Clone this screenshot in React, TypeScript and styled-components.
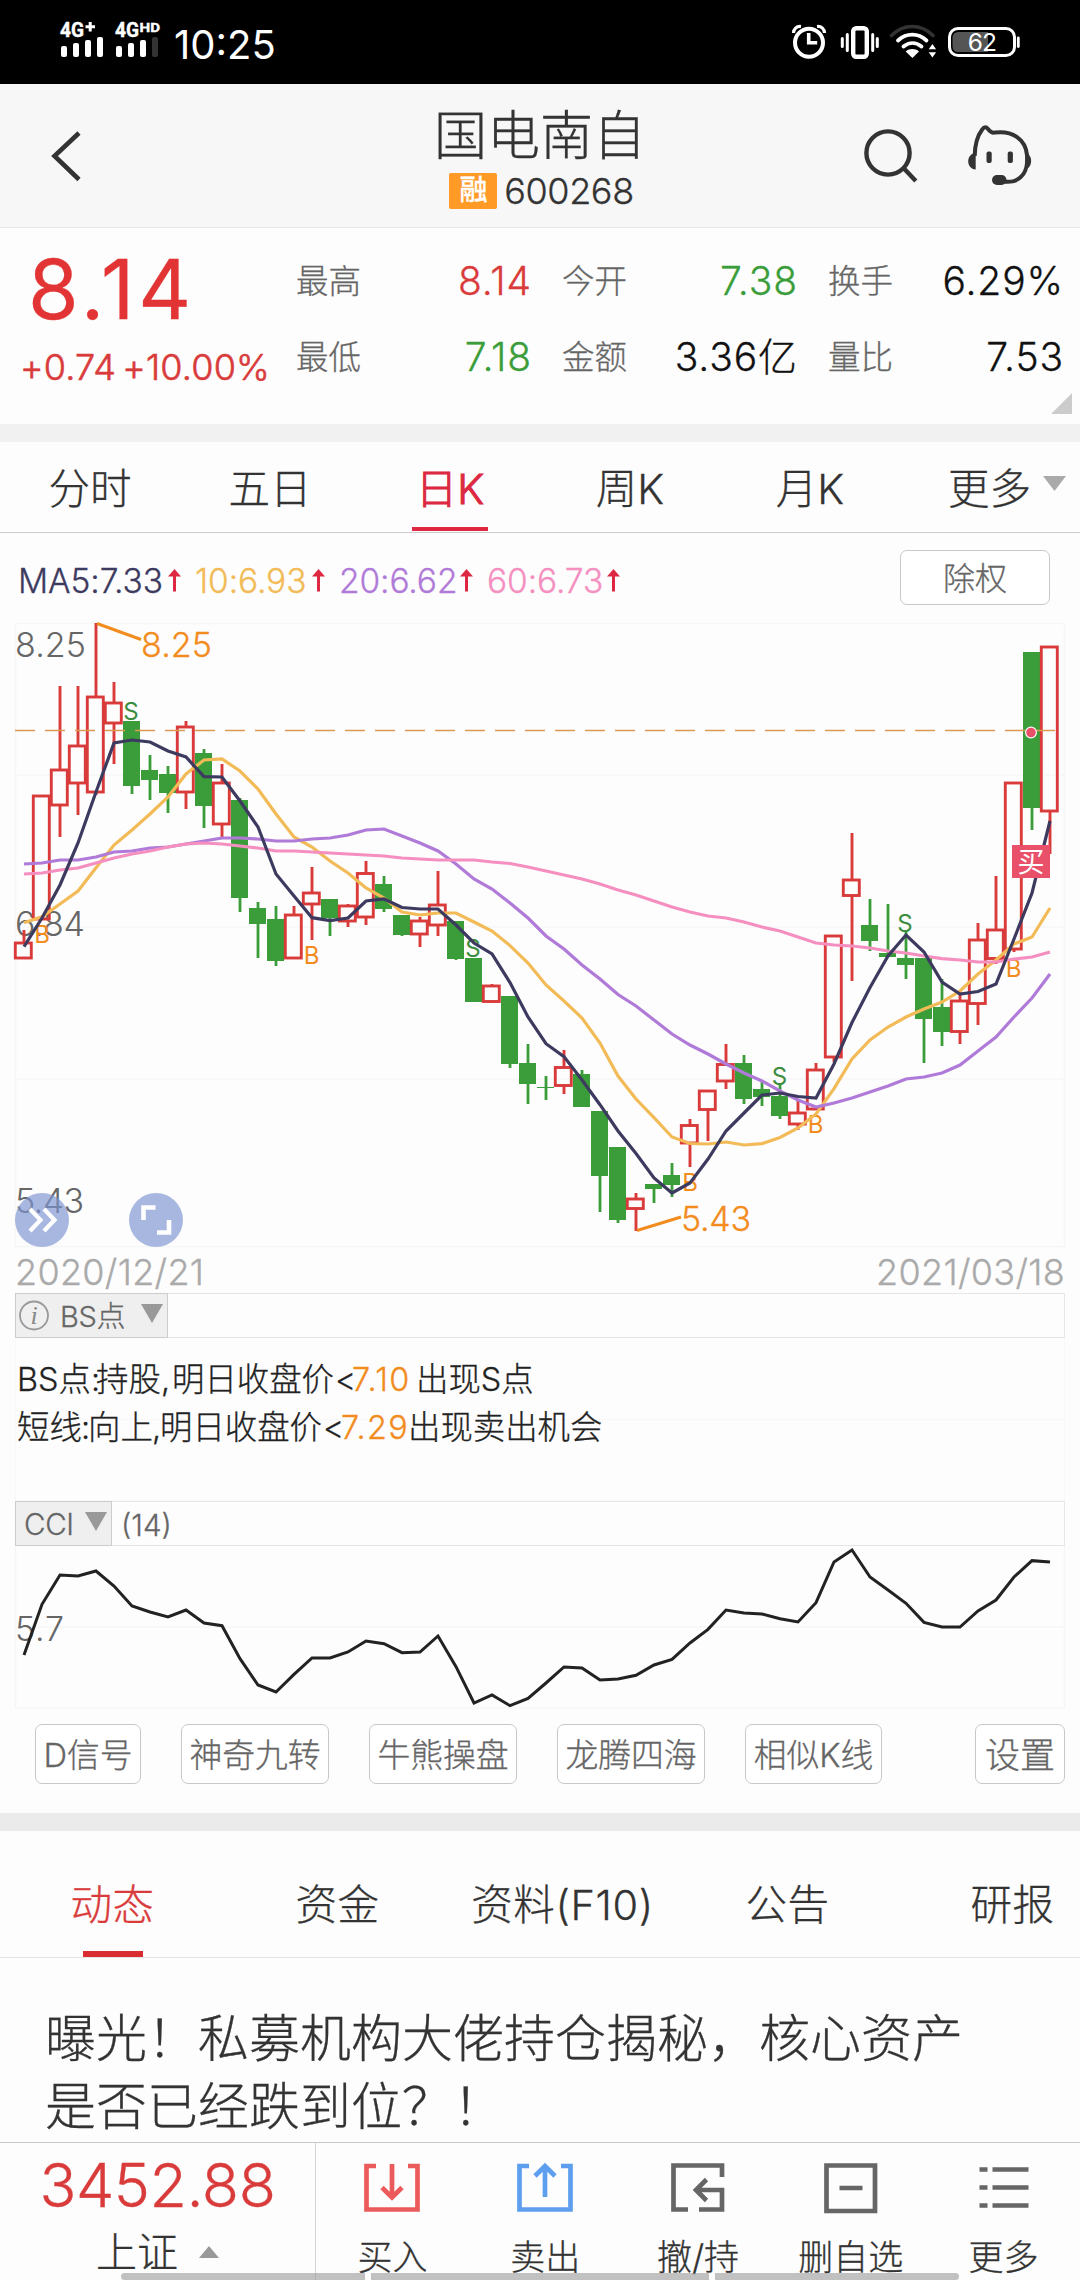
import React from "react";
import styled, { createGlobalStyle } from "styled-components";

const FONT = `Inter, "Noto Sans CJK SC", sans-serif`;

const RED = "#d93b3b";
const GREEN = "#3a9d3a";
const CRIMSON = "#dc2840";
const ORANGE = "#f28c1e";

const GlobalStyle = createGlobalStyle`
  * { box-sizing: border-box; }
  body { margin: 0; background: #fff; }
  svg { display: block; flex: none; }
`;

const Page = styled.main`
  position: relative;
  display: flex;
  flex-direction: column;
  width: 1080px;
  height: 2280px;
  overflow: hidden;
  background: #fdfdfd;
  color: #333;
  font-family: ${FONT};
  font-weight: 300;
  white-space: nowrap;
  -webkit-text-stroke-width: 0.3px;
`;

/* ---------- status bar ---------- */

const StatusBar = styled.header`
  display: flex;
  justify-content: space-between;
  flex: none;
  height: 84px;
  padding: 0 56px 0 56px;
  background: #000;
  color: #fff;
`;

const StatusGroup = styled.div`
  display: flex;
`;

const Clock = styled.time`
  margin-left: 10px;
  font-size: 40px;
  font-weight: 400;
  line-height: 89px;
  -webkit-text-stroke-width: 0;
`;

/* ---------- title bar ---------- */

const TitleBar = styled.div`
  display: grid;
  grid-template-columns: 240px 1fr 240px;
  flex: none;
  height: 144px;
  background: #f7f7f7;
  border-bottom: 1px solid #e6e6e6;
`;

const TitleBlock = styled.div`
  display: flex;
  flex-direction: column;
  align-items: center;
  padding-top: 21px;
`;

const StockName = styled.h1`
  margin: 0;
  font-size: 53px;
  font-weight: 300;
  line-height: 62px;
`;

const CodeLine = styled.div`
  display: flex;
  align-items: center;
  gap: 7px;
  margin: 4px 0 0 3px;
  font-size: 36px;
  line-height: 40px;
  letter-spacing: -0.4px;
`;

const MarginBadge = styled.span`
  width: 48px;
  height: 36px;
  border-radius: 2px;
  background: #ff9a27;
  color: #fff;
  font-size: 28px;
  font-weight: 500;
  line-height: 35px;
  text-align: center;
`;

const HeaderIcons = styled.div`
  display: flex;
  justify-content: flex-end;
`;

/* ---------- quote ---------- */

const Quote = styled.section`
  display: flex;
  flex: none;
  height: 196px;
`;

const PriceBlock = styled.div`
  width: 296px;
  padding: 19px 0 0 20px;
  color: ${RED};
`;

const Price = styled.div`
  padding-left: 8px;
  color: #e23434;
  font-size: 82px;
  font-weight: 400;
  line-height: 86px;
  letter-spacing: 3.8px;
`;

const Change = styled.div`
  display: flex;
  gap: 6px;
  margin-top: 14px;
  font-size: 36px;
  font-weight: 300;
  line-height: 40px;
  letter-spacing: 0.2px;
  -webkit-text-stroke-width: 0.6px;
`;

const Stats = styled.dl`
  display: grid;
  grid-template-columns: repeat(3, 236px);
  grid-auto-rows: 40px;
  column-gap: 30px;
  row-gap: 36px;
  margin: 33px 0 0;
`;

const Stat = styled.div`
  display: flex;
  justify-content: space-between;
  align-items: center;
`;

const StatLabel = styled.dt`
  padding-top: 1px;
  color: #666;
  font-size: 32.5px;
  line-height: 40px;
`;

const StatValue = styled.dd<{ $color?: string }>`
  margin: 0;
  color: ${(p) => p.$color ?? "#111"};
  font-size: 39px;
  line-height: 42px;
  letter-spacing: 0.9px;
`;

const Corner = styled.i`
  align-self: flex-end;
  width: 0;
  height: 0;
  margin: 0 0 10px -13px;
  border-bottom: 21px solid #ccc;
  border-left: 21px solid transparent;
`;

const Band = styled.div<{ $shade: string }>`
  flex: none;
  height: 18px;
  background: ${(p) => p.$shade};
`;

/* ---------- period tabs ---------- */

const PeriodTabs = styled.nav`
  display: flex;
  flex: none;
  height: 91px;
  border-bottom: 1px solid #ccc;
`;

const PeriodTab = styled.div<{ $active?: boolean }>`
  display: flex;
  justify-content: center;
  flex: 1;
  font-size: 41.5px;
  line-height: 95px;
  color: ${(p) => (p.$active ? CRIMSON : "#333")};

  span {
    padding: 0 4px;
    height: 89px;
    border-bottom: ${(p) => (p.$active ? `4px solid ${CRIMSON}` : "0")};
    -webkit-text-stroke-width: ${(p) => (p.$active ? "1px" : "0.3px")};
  }
`;

const Triangle = styled.i<{ $w: number; $h: number; $color: string; $up?: boolean }>`
  flex: none;
  width: ${(p) => p.$w}px;
  height: ${(p) => p.$h}px;
  background: ${(p) => p.$color};
  clip-path: ${(p) => (p.$up ? "polygon(50% 0, 100% 100%, 0 100%)" : "polygon(0 0, 100% 0, 50% 100%)")};
`;

const MoreMark = styled.div`
  margin: 34px -30px 0 8px;
  line-height: 0;
`;

/* ---------- moving averages ---------- */

const AverageRow = styled.div`
  display: flex;
  align-items: center;
  flex: none;
  height: 89px;
  padding: 0 30px 0 18px;
`;

const Average = styled.div<{ $color: string; $width: number }>`
  display: flex;
  justify-content: space-between;
  align-items: center;
  width: ${(p) => p.$width}px;
  margin-right: 14px;
  padding-top: 6px;
  color: ${(p) => p.$color};
  font-size: 33.5px;
  line-height: 40px;
  letter-spacing: -0.1px;
`;

const OutlineButton = styled.button<{ $width?: number; $height: number; $size?: number }>`
  display: flex;
  align-items: center;
  justify-content: center;
  flex: none;
  width: ${(p) => (p.$width ? `${p.$width}px` : "auto")};
  height: ${(p) => p.$height}px;
  padding: 2px 0 0;
  border: 1.5px solid #c8c8c8;
  border-radius: 7px;
  background: #fff;
  color: #666;
  font-family: inherit;
  font-size: ${(p) => p.$size ?? 32}px;
  font-weight: 300;
  line-height: 1;
  -webkit-text-stroke-width: 0.3px;
`;

const Push = styled.span`
  flex: 1;
`;

/* ---------- chart ---------- */

const ChartFrame = styled.div`
  flex: none;
  height: 627px;
`;

const DateRow = styled.div`
  display: flex;
  justify-content: space-between;
  flex: none;
  height: 44px;
  padding: 0 15px 0 15px;
  color: #aaa;
  font-size: 36px;
  line-height: 47px;
  letter-spacing: 0.3px;
`;

const IndicatorBar = styled.div`
  display: flex;
  flex: none;
  height: 45px;
  margin: 0 15px;
  border: 1px solid #e6e6e6;
  color: #666;
  font-size: 29.5px;
  line-height: 47px;
`;

const IndicatorPicker = styled.div<{ $width: number }>`
  display: flex;
  align-items: center;
  width: ${(p) => p.$width}px;
  margin: -1px 9px -1px -1px;
  padding: 0 4px 0 3px;
  border: 1px solid #ccc;
  background: #efefef;

  i { margin-bottom: 4px; }
`;

const PickerName = styled.span<{ $left: number; $size: number }>`
  flex: 1;
  margin-left: ${(p) => p.$left}px;
  padding-top: 1px;
  font-size: ${(p) => p.$size}px;
  letter-spacing: -0.3px;
`;

const Advice = styled.div`
  flex: none;
  height: 163px;
  margin: 0 15px;
  padding: 18px 0 0 1px;
  border: 1px solid #f8f8f8;
  border-top: 0;
  background: linear-gradient(#f8f8f8, #f8f8f8) 0 81px / 100% 1px no-repeat;
  color: #222;
  font-size: 32.4px;
  line-height: 48px;
`;

const AdviceLine = styled.div`
  display: flex;
`;

const Piece = styled.span<{ $width: number; $hot?: boolean }>`
  width: ${(p) => p.$width}px;
  color: ${(p) => (p.$hot ? ORANGE : "inherit")};
  letter-spacing: ${(p) => (p.$hot ? "1.4px" : "0")};
`;

const StrategyRow = styled.div`
  display: flex;
  gap: 40px;
  flex: none;
  height: 104px;
  padding: 15px 15px 0 35px;
`;

/* ---------- news ---------- */

const NewsTabs = styled.nav`
  display: flex;
  flex: none;
  height: 127px;
  border-bottom: 1px solid #e4e4e4;
`;

const NewsTab = styled.div<{ $active?: boolean }>`
  display: flex;
  flex: none;
  flex-direction: column;
  align-items: center;
  width: 225px;
  padding-top: 44px;
  color: ${(p) => (p.$active ? RED : "#333")};
  font-size: 41.5px;
  line-height: 60px;
  letter-spacing: 0.6px;
`;

const NewsMark = styled.i`
  width: 60px;
  height: 6px;
  margin-top: 16px;
  background: #d92c30;
`;

const Headline = styled.h2`
  flex: none;
  width: 990px;
  height: 184px;
  margin: 0;
  padding: 47px 0 0 45px;
  font-size: 51px;
  font-weight: 300;
  line-height: 68px;
`;

/* ---------- bottom bar ---------- */

const BottomBar = styled.footer`
  display: flex;
  flex: none;
  height: 138px;
  border-top: 1px solid #c8c8c8;
  background: #fdfdfd;
`;

const IndexCell = styled.div`
  display: flex;
  flex-direction: column;
  align-items: center;
  width: 316px;
  padding-top: 7px;
  border-right: 1px solid #d4d4d4;
`;

const IndexValue = styled.div`
  color: ${RED};
  font-size: 61px;
  line-height: 70px;
  letter-spacing: -0.5px;
`;

const IndexName = styled.div`
  display: flex;
  align-items: center;
  gap: 21px;
  padding-top: 6px;
  font-size: 41px;
  line-height: 52px;
`;

const Action = styled.div`
  display: flex;
  flex: 1;
  flex-direction: column;
  align-items: center;
  padding-top: 17px;
  font-size: 35px;
  line-height: 44px;

  span { margin-top: 19px; }
`;

const HomeBar = styled.div`
  position: absolute;
  left: 121px;
  bottom: 0;
  display: flex;
  gap: 6px;
  width: 838px;
  height: 7px;
`;

const HomePart = styled.i<{ $grow: number; $radius: string }>`
  flex: ${(p) => p.$grow} 0 0;
  border-radius: ${(p) => p.$radius};
  background: rgba(150, 150, 150, 0.58);
`;

/* ---------- data ---------- */

type Candle = [up: 0 | 1, high: number, top: number, bottom: number, low: number];

const CANDLES: Candle[] = [
  [1, 930, 943, 958, 959], [1, 796, 796, 919, 919], [1, 686, 770, 805, 837], [1, 686, 746, 783, 815],
  [1, 623, 697, 792, 795], [1, 682, 703, 723, 764], [0, 721, 721, 786, 794], [0, 755, 770, 780, 800],
  [0, 766, 774, 793, 813], [1, 721, 727, 792, 809], [0, 749, 753, 806, 828], [1, 764, 783, 824, 837],
  [0, 798, 800, 898, 912], [0, 902, 908, 924, 958], [0, 906, 919, 961, 966], [1, 906, 915, 958, 958],
  [1, 867, 893, 904, 940], [0, 899, 899, 918, 936], [1, 904, 906, 921, 927], [1, 861, 873.5, 917, 925],
  [0, 876, 884, 909, 912], [0, 915, 915, 935, 936], [1, 917, 921, 934, 947], [1, 871, 905, 925, 936],
  [0, 921, 921, 959, 960], [0, 958, 958, 1002, 1002], [1, 984, 986, 1001.5, 1001], [0, 996, 996, 1064, 1068],
  [0, 1044, 1063, 1084, 1104], [0, 1076, 1087, 1088, 1100], [1, 1050, 1067.5, 1085.5, 1094], [0, 1070, 1074, 1107, 1107],
  [0, 1111, 1111, 1176, 1212], [0, 1147, 1147, 1220, 1223], [1, 1193, 1199, 1208.5, 1231], [0, 1184, 1184, 1189, 1203],
  [0, 1163, 1175, 1185, 1197], [1, 1119, 1125.5, 1143, 1167], [1, 1090, 1091, 1109.5, 1141], [1, 1044, 1064.5, 1081, 1089],
  [0, 1055, 1063, 1099, 1104], [0, 1081, 1089, 1097, 1106], [0, 1085, 1096, 1116, 1119], [1, 1101, 1113, 1124, 1130],
  [1, 1063, 1070, 1109, 1109], [1, 936, 936, 1057, 1062], [1, 833, 880, 895.5, 981], [0, 899, 925, 941, 951],
  [0, 904, 953, 957, 957], [0, 932, 958, 965, 979], [0, 958, 958, 1019, 1063], [0, 979, 1007, 1032, 1046],
  [1, 991, 1001, 1031.5, 1044], [1, 923, 940, 1003.5, 1025], [1, 876, 930, 958.5, 964], [1, 783, 783, 949, 952],
  [0, 652, 652, 808, 830], [1, 647, 647, 811, 854],
];

const AVERAGES = [
  {
    color: "#f2bb57",
    ys: [922.7, 916.7, 904, 891, 867.7, 845, 830, 814, 797, 774, 760, 759, 771, 789, 814, 837, 847, 861, 873, 888, 898, 912, 915, 913, 913, 922, 931, 945.6, 963, 985, 1001, 1018, 1043, 1076, 1099, 1117.7, 1137, 1143.5, 1144, 1142, 1145, 1143.6, 1137.5, 1128, 1114, 1088.6, 1059, 1040, 1027, 1017, 1009, 1002, 991, 974, 960, 944, 937, 908],
  },
  {
    color: "#b07ad8",
    ys: [864, 863, 860, 860, 857, 852, 851, 848, 847, 844, 841, 838, 838, 839, 841, 841, 839, 838, 835, 830, 829, 836, 843, 851, 864, 879, 889, 903, 918, 936, 949, 965, 979, 994.5, 1006, 1020, 1034, 1045, 1054, 1064, 1073, 1081, 1091, 1100, 1107, 1103, 1098, 1092, 1086, 1079, 1077, 1073, 1065, 1051, 1037, 1017, 998, 974],
  },
  {
    color: "#f48fc0",
    ys: [874, 873, 870, 868, 863, 858, 854, 851, 847, 844, 843, 844, 846, 848, 851, 851, 852, 853, 854, 855, 856, 858, 859, 860, 860, 860, 862, 863.5, 867, 871, 875, 879, 884, 890, 895, 901, 907, 912, 916, 918, 922, 927, 931, 937, 943, 945, 946, 948, 951, 953, 956, 958.6, 960, 962, 962, 959, 957, 952],
  },
  {
    color: "#3d3a5f",
    ys: [946.7, 918, 885, 843, 792, 743, 740, 742, 751, 757, 776.7, 777, 801, 827, 874, 896, 917.7, 920.7, 918, 901, 899, 907.5, 909, 909, 925, 943, 954, 982.6, 1017, 1043.7, 1056.6, 1080, 1104.7, 1131, 1153.5, 1178, 1193, 1183, 1159, 1131, 1113, 1095, 1093, 1096.5, 1098, 1064, 1022.5, 987.5, 956, 935, 952, 982, 994, 991.5, 984, 939, 893, 821],
  },
];

const CCI = [525, 373, 285, 288, 273, 318, 378, 396, 411, 390, 429, 437, 536, 615, 636, 583, 534, 534, 516, 483, 491, 518, 516, 468, 560, 669, 645, 677, 655, 609, 561, 564, 600, 597, 586, 555, 538, 489, 448, 390, 399, 402, 416, 426, 368, 246, 210, 291, 330, 370, 427, 441, 441, 393, 360, 291, 242, 246].map(
  (v) => 1480 + v / 3,
);

const SIGNALS: [string, number, number][] = [
  ["S", 131, 719.5], ["S", 473, 957], ["S", 779.5, 1084.5], ["S", 905, 931.5],
  ["B", 42, 943], ["B", 311.5, 963.5], ["B", 690, 1190.5], ["B", 815.500, 1132.5], ["B", 1013.5, 977],
];

const slotX = (i: number) => 24 + i * 18;
const toPoints = (ys: number[]) => ys.map((y, i) => `${slotX(i)},${y}`).join(" ");

/* ---------- drawings ---------- */

const SignalIcon = () => (
  <svg width="108" height="84" viewBox="56 0 108 84" fill="#fff">
    <g fontFamily="Roboto, sans-serif" fontWeight="700" stroke="#fff" strokeWidth="0.4">
      <text x="60" y="36.5" fontSize="19.5" textLength="24" lengthAdjust="spacingAndGlyphs">4G</text>
      <text x="115" y="36.5" fontSize="19.5" textLength="24" lengthAdjust="spacingAndGlyphs">4G</text>
      <text x="139.5" y="32" fontSize="13.5" textLength="20.5" lengthAdjust="spacingAndGlyphs">HD</text>
    </g>
    <path d="M85.5 26.7h9.5M90.2 22v9.5" stroke="#fff" strokeWidth="3" />
    {[0, 1, 2, 3].map((i) => (
      <React.Fragment key={i}>
        <rect x={61 + i * 12} y={46 - i * 3} width="6" height={11 + i * 3} rx="2" />
        <rect x={116 + i * 12} y={46 - i * 3} width="6" height={11 + i * 3} rx="2" fill={i === 3 ? "#333" : "#fff"} />
      </React.Fragment>
    ))}
  </svg>
);

const DeviceIcons = () => (
  <svg width="234" height="84" viewBox="790 0 234 84" fill="none" stroke="#fff">
    <circle cx="809" cy="42.7" r="14" strokeWidth="4" />
    <path d="M808.7 33v9.7h8.5" strokeWidth="3.6" />
    <path d="M793.5 33c0-4 3-7 7.500-6.500M824.500 33c0-4-3-7-7.500-6.500" strokeWidth="3.200" />
    <rect x="853.2" y="28.2" width="13.600" height="28.600" rx="3" strokeWidth="4.400" />
    <path d="M847.300 34.500v16M842.300 38.500v8M872.700 34.500v16M877.300 38.500v8" strokeWidth="3" strokeLinecap="round" />
    <path d="M891.500 35.500c12-12 29.500-12 41.500 0" stroke="#333" strokeWidth="3.600" strokeLinecap="round" />
    <path d="M898 40.500c8.500-7.800 20-7.800 28.500 0M903.500 46.500c5.500-4.500 12.500-4.500 18 0" strokeWidth="3.800" strokeLinecap="round" />
    <path d="M905.700 51.500c4-3.200 9.300-3.200 13.300 0l-6.600 6.500z" fill="#fff" stroke="none" />
    <path d="M928.700 49.300l3.700-5.300 3.700 5.300zM928.700 52.300l3.700 5.300 3.700-5.300z" fill="#fff" stroke="none" />
    <rect x="949.500" y="28.500" width="65" height="27" rx="8.500" strokeWidth="3" />
    <path d="M958 32h30v20h-30a5.500 5.500 0 0 1-5.500-5.500v-9a5.500 5.500 0 0 1 5.500-5.500z" fill="#555" stroke="none" />
    <path d="M1018.300 38v8.500" strokeWidth="2.800" strokeLinecap="round" />
    <text x="982" y="51.300" fill="#fff" stroke="none" fontFamily="Inter" fontWeight="400" fontSize="24.500" textAnchor="middle" letterSpacing="-0.8">62</text>
  </svg>
);

const BackIcon = () => (
  <svg width="120" height="143" viewBox="0 84 120 143" fill="none" stroke="#333" strokeWidth="4.600">
    <path d="M79 133L54.500 156 79 179.500" />
  </svg>
);

const ToolIcons = () => (
  <svg width="240" height="143" viewBox="840 84 240 143" fill="none" stroke="#333" strokeWidth="4.400">
    <circle cx="888" cy="153" r="21.600" />
    <path d="M903.500 168l12.300 13" />
    <path d="M974.700 156c.2-12 2.500-20 7.500-26.500 2.300-3 4-2.700 5.800-.5 1.800 2.300 3.500 4.200 6.500 3.600 17.500-2.600 31 6.400 32.500 22.400 1 14-2.500 22-12.500 25.800-3 1-6 1-10 1" strokeWidth="4" />
    <path d="M975.700 153v16.500c-10-.5-10-16 0-16.500z" fill="#333" stroke="none" />
    <path d="M1025.500 153c7.500 1 7.500 15 0 15.800z" fill="#333" stroke="none" />
    <rect x="986.500" y="151.500" width="5.200" height="11.500" rx="2" fill="#333" stroke="none" />
    <rect x="1007.700" y="151.500" width="5.200" height="11.500" rx="2" fill="#333" stroke="none" />
    <rect x="992" y="175" width="14.500" height="10" rx="5" fill="#333" stroke="none" />
  </svg>
);

const UpArrow = () => (
  <svg width="13" height="24" viewBox="0 0 13 24">
    <path d="M6.500 0L13 7.500H8v15H5v-15H0z" fill={CRIMSON} />
  </svg>
);

const InfoIcon = () => (
  <svg width="31" height="31" viewBox="0 0 31 31">
    <circle cx="15" cy="15.500" r="14" fill="none" stroke="#999" strokeWidth="1.800" />
    <text x="15" y="24" fill="#888" fontFamily="Liberation Serif, serif" fontStyle="italic" fontWeight="400" fontSize="26" textAnchor="middle">i</text>
  </svg>
);

const CandleChart = () => (
  <svg width="1080" height="627" viewBox="0 622 1080 627" fontFamily={FONT}>
    <g stroke="#f6f6f6" strokeWidth="1.500" fill="none">
      <rect x="15.500" y="623.500" width="1049" height="623" />
      <path d="M15 775h1050M15 927h1050M15 1079h1050" />
    </g>
    <g fill="#666" fontSize="34" fontWeight="300">
      <text x="15" y="656.500" textLength="71">8.25</text>
      <text x="15" y="935.500" textLength="70">6.84</text>
      <text x="15" y="1213" textLength="69">5.43</text>
    </g>
    {CANDLES.map(([up, high, top, bottom, low], i) => {
      const x = slotX(i);
      return up ? (
        <g key={i} stroke={RED} strokeWidth="2.900" fill="none">
          <path d={`M${x} ${high}V${top}M${x} ${bottom}V${low}`} />
          <rect x={x - 8.7} y={top} width="16" height={bottom - top} />
        </g>
      ) : (
        <g key={i} fill={GREEN}>
          <rect x={x - 1.4} y={high} width="2.800" height={low - high} />
          <rect x={x - 9} y={top} width="17" height={bottom - top} />
        </g>
      );
    })}
    <path d="M15 730.500H1055" stroke="#dc9a50" strokeWidth="1.500" strokeDasharray="20 10" />
    <g fontSize="24" fontWeight="400" textAnchor="middle">
      {SIGNALS.map(([letter, x, y]) => (
        <text key={`${x}`} x={x} y={y} fill={letter === "S" ? "#3c8c40" : ORANGE}>{letter}</text>
      ))}
    </g>
    {AVERAGES.map(({ color, ys }) => (
      <polyline key={color} points={toPoints(ys)} fill="none" stroke={color} strokeWidth="3.200" />
    ))}
    <g stroke={ORANGE} strokeWidth="3">
      <path d="M97 623.500L141 639.500M637 1230.500L681 1217" />
    </g>
    <g fill={ORANGE} fontSize="34" fontWeight="300" stroke={ORANGE} strokeWidth="0.300">
      <text x="141" y="656.500" textLength="71">8.25</text>
      <text x="681" y="1231" textLength="70">5.43</text>
    </g>
    <circle cx="1031" cy="732.500" r="5.400" fill="#e9506a" stroke="#fff" strokeWidth="1.200" />
    <rect x="1012" y="845" width="38" height="33" fill="#e9506a" />
    <text x="1031" y="871.500" fill="#fff" fontSize="27" fontWeight="400" textAnchor="middle">买</text>
    <g fill="rgba(125, 147, 210, 0.660)">
      <circle cx="42" cy="1220" r="27" />
      <circle cx="156" cy="1220" r="27" />
    </g>
    <g fill="none" stroke="#fff" strokeWidth="4.200">
      <path d="M30 1209l10.500 11L30 1231M44 1209l10.500 11L44 1231" />
      <path d="M143.500 1220v-12.500h12M169 1220v12.500h-12" strokeWidth="4.600" />
    </g>
  </svg>
);

const CciChart = () => (
  <svg width="1080" height="163" viewBox="0 1546 1080 163" fontFamily={FONT}>
    <path d="M15.500 1546v162h1049v-162M15 1627h1050" fill="none" stroke="#f6f6f6" strokeWidth="1.500" />
    <text x="15" y="1640.500" fill="#666" fontSize="34" fontWeight="300" textLength="49">5.7</text>
    <polyline points={toPoints(CCI)} fill="none" stroke="#222" strokeWidth="3" />
  </svg>
);

const ACTIONS: { label: string; color: string; art: React.ReactNode }[] = [
  {
    label: "买入",
    color: "#ec5b5b",
    art: <><path d="M14 6H4.500V49.500H55.500V6H46" /><path d="M30 4v33M20 27.500l10 10 10-10" /></>,
  },
  {
    label: "卖出",
    color: "#5d9fee",
    art: <><path d="M14 6H4.500V49.500H55.500V6H46" /><path d="M30 37V6M20 16l10-10 10 10" /></>,
  },
  {
    label: "撤/持",
    color: "#666",
    art: <path d="M54 17V5.500H5.500V49.500H20M31 49.500H54V30H27M38.500 19.500l-10.500 10.500 10.500 10.500" />,
  },
  {
    label: "删自选",
    color: "#666",
    art: <path d="M5.500 5.500h48.500v45.500h-48.500zM18.500 28h23" />,
  },
  {
    label: "更多",
    color: "#666",
    art: <path d="M5.500 9.500h8M18.500 9.500h36M5.500 27.500h8M18.500 27.500h36M5.500 45.500h8M18.500 45.500h36" />,
  },
];

/* ---------- screen ---------- */

const PERIODS = ["分时", "五日", "日K", "周K", "月K"];
const NEWS = ["动态", "资金", "资料(F10)", "公告", "研报"];
const STRATEGIES: [string, number][] = [["D信号", 106], ["神奇九转", 148], ["牛熊操盘", 148], ["龙腾四海", 148], ["相似K线", 137]];
const STATS: [string, string, string?][] = [
  ["最高", "8.14", RED], ["今开", "7.38", GREEN], ["换手", "6.29%"],
  ["最低", "7.18", GREEN], ["金额", "3.36亿"], ["量比", "7.53"],
];
const MA_LABELS: [string, string, number][] = [
  ["MA5:7.33", "#3d3a5f", 163], ["10:6.93", "#f2bb57", 130], ["20:6.62", "#b07ad8", 134], ["60:6.73", "#f48fc0", 133],
];

export default function App() {
  return (
    <Page>
      <GlobalStyle />
      <StatusBar>
        <StatusGroup>
          <SignalIcon />
          <Clock>10:25</Clock>
        </StatusGroup>
        <DeviceIcons />
      </StatusBar>

      <TitleBar>
        <BackIcon />
        <TitleBlock>
          <StockName>国电南自</StockName>
          <CodeLine>
            <MarginBadge>融</MarginBadge>
            600268
          </CodeLine>
        </TitleBlock>
        <HeaderIcons>
          <ToolIcons />
        </HeaderIcons>
      </TitleBar>

      <Quote>
        <PriceBlock>
          <Price>8.14</Price>
          <Change>
            <span>+0.74</span>
            <span>+10.00%</span>
          </Change>
        </PriceBlock>
        <Stats>
          {STATS.map(([label, value, color]) => (
            <Stat key={label}>
              <StatLabel>{label}</StatLabel>
              <StatValue $color={color}>{value}</StatValue>
            </Stat>
          ))}
        </Stats>
        <Corner />
      </Quote>
      <Band $shade="#f1f1f1" />

      <PeriodTabs>
        {PERIODS.map((name) => (
          <PeriodTab key={name} $active={name === "日K"}>
            <span>{name}</span>
          </PeriodTab>
        ))}
        <PeriodTab>
          <span>更多</span>
          <MoreMark>
            <Triangle as="div" $w={23} $h={15} $color="#aaa" />
          </MoreMark>
        </PeriodTab>
      </PeriodTabs>

      <AverageRow>
        {MA_LABELS.map(([text, color, width]) => (
          <Average key={text} $color={color} $width={width}>
            {text}
            <UpArrow />
          </Average>
        ))}
        <Push />
        <OutlineButton $width={150} $height={55}>除权</OutlineButton>
      </AverageRow>

      <ChartFrame>
        <CandleChart />
      </ChartFrame>
      <DateRow>
        <span>2020/12/21</span>
        <span>2021/03/18</span>
      </DateRow>

      <IndicatorBar>
        <IndicatorPicker $width={153}>
          <InfoIcon />
          <PickerName $left={10} $size={29}>BS点</PickerName>
          <Triangle $w={22} $h={19} $color="#999" />
        </IndicatorPicker>
      </IndicatorBar>
      <Advice>
        <AdviceLine>
          <Piece $width={74}>BS点</Piece>
          <Piece $width={5}>:</Piece>
          <Piece $width={65}>持股</Piece>
          <Piece $width={11}>,</Piece>
          <Piece $width={163}>明日收盘价</Piece>
          <Piece $width={17}>{"<"}</Piece>
          <Piece $width={64} $hot>7.10</Piece>
          <Piece $width={120}>出现S点</Piece>
        </AdviceLine>
        <AdviceLine>
          <Piece $width={64}>短线</Piece>
          <Piece $width={7}>:</Piece>
          <Piece $width={64}>向上</Piece>
          <Piece $width={8}>,</Piece>
          <Piece $width={163}>明日收盘价</Piece>
          <Piece $width={18}>{"<"}</Piece>
          <Piece $width={67} $hot>7.29</Piece>
          <Piece $width={200}>出现卖出机会</Piece>
        </AdviceLine>
      </Advice>

      <IndicatorBar>
        <IndicatorPicker $width={97}>
          <PickerName $left={5} $size={29.5}>CCI</PickerName>
          <Triangle $w={22} $h={19} $color="#999" />
        </IndicatorPicker>
        <span>(14)</span>
      </IndicatorBar>
      <CciChart />

      <StrategyRow>
        {STRATEGIES.map(([name, width]) => (
          <OutlineButton key={name} $width={width} $height={60} $size={32.8}>{name}</OutlineButton>
        ))}
        <Push />
        <OutlineButton $width={90} $height={60} $size={35}>设置</OutlineButton>
      </StrategyRow>
      <Band $shade="#ebebeb" />

      <NewsTabs>
        {NEWS.map((name, i) => (
          <NewsTab key={name} $active={i === 0}>
            {name}
            {i === 0 && <NewsMark />}
          </NewsTab>
        ))}
      </NewsTabs>
      <Headline>
        曝光！私募机构大佬持仓揭秘，核心资产
        <br />
        是否已经跌到位？！
      </Headline>

      <BottomBar>
        <IndexCell>
          <IndexValue>3452.88</IndexValue>
          <IndexName>
            上证
            <Triangle $w={20} $h={12} $color="#999" $up />
          </IndexName>
        </IndexCell>
        {ACTIONS.map(({ label, color, art }) => (
          <Action key={label}>
            <svg width="60" height="56" viewBox="0 0 60 56" fill="none" stroke={color} strokeWidth="4.700">
              {art}
            </svg>
            <span>{label}</span>
          </Action>
        ))}
      </BottomBar>
      <HomeBar>
        <HomePart $grow={244} $radius="4px 0 0 4px" />
        <HomePart $grow={338} $radius="0" />
        <HomePart $grow={244} $radius="0 4px 4px 0" />
      </HomeBar>
    </Page>
  );
}
